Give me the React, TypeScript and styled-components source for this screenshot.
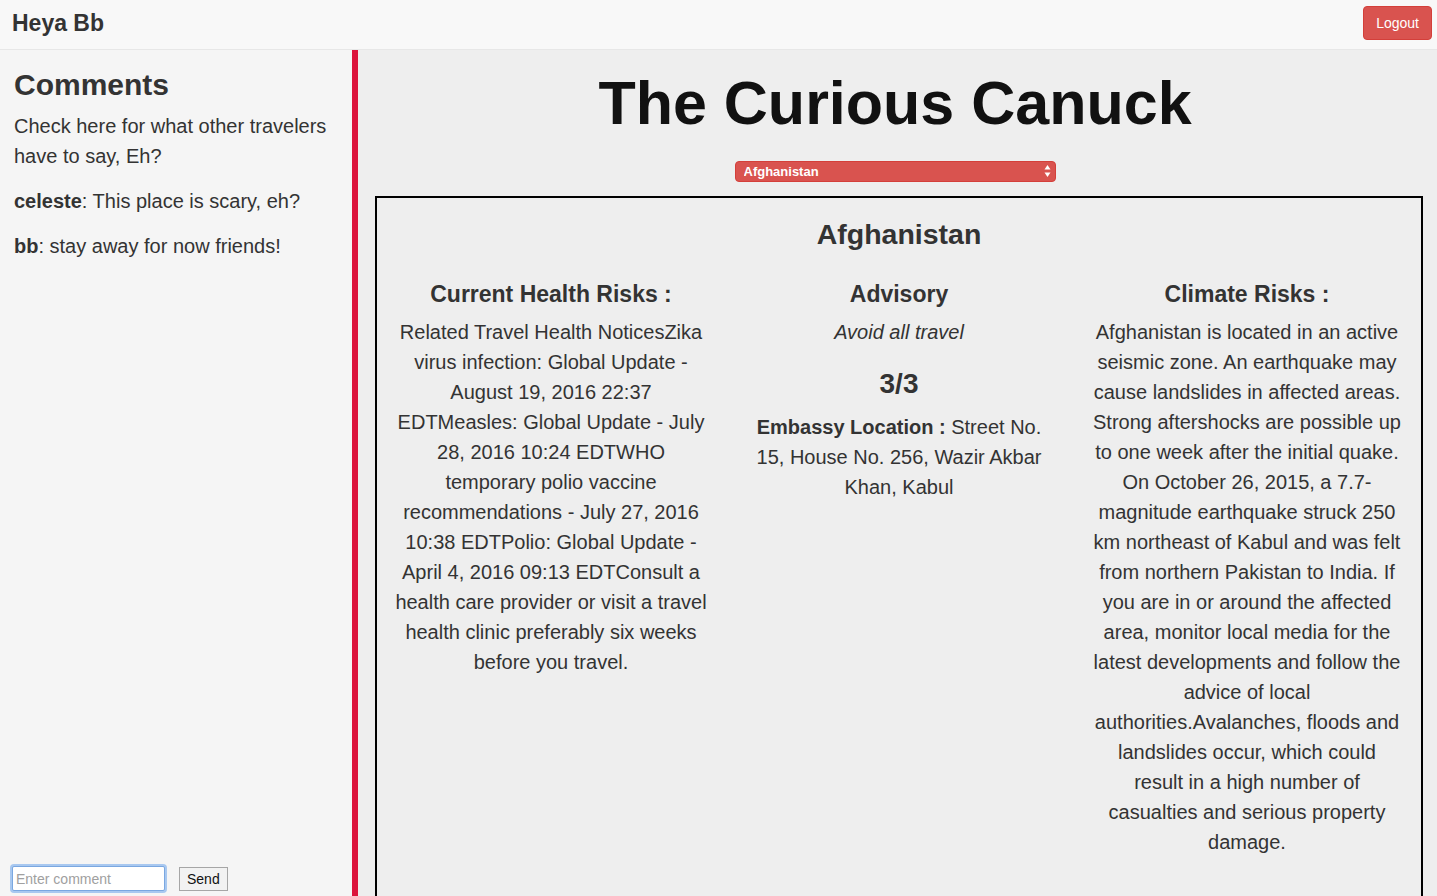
import React from "react";
import { styled, createGlobalStyle } from "styled-components";

const GlobalStyle = createGlobalStyle`
    html, body {
        margin: 0;
        padding: 0;
        height: 100%;
        overflow: hidden;
    }
    body {
        font-family: "Liberation Sans", Arial, Helvetica, sans-serif;
        color: #333;
        background: #eee;
    }
    * {
        box-sizing: border-box;
    }
`

const Page = styled.div`
    display: flex;
    flex-direction: column;
    height: 100vh;
`

const NavBar = styled.div`
    height: 50px;
    flex: none;
    display: flex;
    align-items: center;
    justify-content: space-between;
    padding: 0 5px 0 12px;
    background: #f8f8f8;
    border-bottom: 1px solid #e7e7e7;
`

const Brand = styled.div`
    font-size: 23px;
    font-weight: bold;
    color: #333;
    margin-top: -2px;
`

const DangerButton = styled.button`
    font-family: inherit;
    font-size: 14px;
    color: #fff;
    background: #d9534f;
    border: 1px solid #d43f3a;
    border-radius: 4px;
    height: 34px;
    padding: 0 12px;
    margin-top: -4px;
`

const Body = styled.div`
    flex: 1;
    display: flex;
    min-height: 0;
`

const Sidebar = styled.div`
    width: 358px;
    flex: none;
    display: flex;
    flex-direction: column;
    background: #f5f5f5;
    border-right: 6px solid #dc143c;
    padding: 0 14px 5px 14px;
`

const SideTitle = styled.h2`
    font-size: 30px;
    font-weight: bold;
    line-height: 33px;
    margin: 18px 0 10px;
`

const SideText = styled.p`
    font-size: 20px;
    line-height: 30px;
    margin: 0 0 15px;
`

const CommentForm = styled.form`
    margin-top: auto;
    display: flex;
    align-items: center;
    gap: 14px;
    margin-left: -2px;
`

const CommentInput = styled.input`
    width: 153px;
    height: 25px;
    font-family: inherit;
    font-size: 14px;
    padding: 2px 3px;
    border: 1px solid #7aa7e0;
    border-radius: 2px;
    outline: none;
    box-shadow: 0 0 0 2px #a8c8f0;
    background: #fff;
    &::placeholder {
        color: #a0a0a0;
    }
`

const PlainButton = styled.button`
    font-family: inherit;
    font-size: 14px;
    height: 24px;
    padding: 0 7px;
    background: #f2f2f2;
    border: 1px solid #a6a6a6;
    color: #111;
`

const Main = styled.div`
    flex: 1;
    padding: 0 14px 0 17px;
    display: flex;
    flex-direction: column;
    align-items: center;
    background: #eee;
`

const Title = styled.h1`
    font-size: 61px;
    font-weight: bold;
    line-height: 66px;
    margin: 20px 0 25px;
    color: #111;
    margin-right: 8px;
`

const SelectWrap = styled.div`
    position: relative;
    width: 321px;
    margin-right: 8px;
`

const CountrySelect = styled.select`
    appearance: none;
    width: 100%;
    height: 21px;
    font-family: inherit;
    font-size: 13px;
    font-weight: bold;
    color: #fff;
    background: #d9534f;
    border: 1px solid #d43f3a;
    border-radius: 4px;
    padding: 0 20px 0 8px;
    outline: none;
`

const Arrows = styled.span`
    position: absolute;
    right: 5px;
    top: 3px;
    pointer-events: none;
    display: flex;
`

const InfoBox = styled.div`
    align-self: stretch;
    margin-top: 14px;
    border: 2px solid #000;
    padding: 0 0 80px;
    text-align: center;
`

const CountryTitle = styled.h2`
    font-size: 28.5px;
    font-weight: bold;
    line-height: 33px;
    margin: 20px 0 10px;
`

const Columns = styled.div`
    display: grid;
    grid-template-columns: repeat(3, 1fr);
`

const Column = styled.div`
    padding: 0 15px;
`

const ColTitle = styled.h3`
    font-size: 23px;
    font-weight: bold;
    line-height: 26px;
    margin: 20px 0 10px;
`

const ColText = styled.p<{ $italic?: boolean; $width?: number }>`
    font-size: 20px;
    line-height: 30px;
    margin: 0 auto 10px;
    max-width: ${p => (p.$width ? `${p.$width}px` : "none")};
    font-style: ${p => (p.$italic ? "italic" : "normal")};
`

const Rating = styled.div`
    font-size: 28px;
    font-weight: bold;
    line-height: 31px;
    margin: 21px 0 13px;
`

const health =
    "Related Travel Health NoticesZika virus infection: Global Update - August 19, 2016 22:37 EDTMeasles: Global Update - July 28, 2016 10:24 EDTWHO temporary polio vaccine recommendations - July 27, 2016 10:38 EDTPolio: Global Update - April 4, 2016 09:13 EDTConsult a health care provider or visit a travel health clinic preferably six weeks before you travel."

const climate =
    "Afghanistan is located in an active seismic zone. An earthquake may cause landslides in affected areas. Strong aftershocks are possible up to one week after the initial quake. On October 26, 2015, a 7.7-magnitude earthquake struck 250 km northeast of Kabul and was felt from northern Pakistan to India. If you are in or around the affected area, monitor local media for the latest developments and follow the advice of local authorities.Avalanches, floods and landslides occur, which could result in a high number of casualties and serious property damage."

const comments = [
    { user: "celeste", text: "This place is scary, eh?" },
    { user: "bb", text: "stay away for now friends!" },
]

const App: React.FC = () => {
    return (
        <Page>
            <GlobalStyle />
            <NavBar>
                <Brand>Heya Bb</Brand>
                <DangerButton>Logout</DangerButton>
            </NavBar>
            <Body>
                <Sidebar>
                    <SideTitle>Comments</SideTitle>
                    <SideText>Check here for what other travelers have to say, Eh?</SideText>
                    {comments.map(c => (
                        <SideText key={c.user}>
                            <b>{c.user}</b>: {c.text}
                        </SideText>
                    ))}
                    <CommentForm onSubmit={e => e.preventDefault()}>
                        <CommentInput placeholder="Enter comment" />
                        <PlainButton type="submit">Send</PlainButton>
                    </CommentForm>
                </Sidebar>
                <Main>
                    <Title>The Curious Canuck</Title>
                    <SelectWrap>
                        <CountrySelect defaultValue="Afghanistan">
                            <option>Afghanistan</option>
                            <option>Albania</option>
                            <option>Algeria</option>
                        </CountrySelect>
                        <Arrows>
                            <svg width="7" height="14" viewBox="0 0 7 14">
                                <path d="M3.5 1 L6.5 5.5 L0.5 5.5 Z" fill="#fff" />
                                <path d="M3.5 13 L6.5 8.5 L0.5 8.5 Z" fill="#fff" />
                            </svg>
                        </Arrows>
                    </SelectWrap>
                    <InfoBox>
                        <CountryTitle>Afghanistan</CountryTitle>
                        <Columns>
                            <Column>
                                <ColTitle>Current Health Risks :</ColTitle>
                                <ColText>{health}</ColText>
                            </Column>
                            <Column>
                                <ColTitle>Advisory</ColTitle>
                                <ColText $italic>Avoid all travel</ColText>
                                <Rating>3/3</Rating>
                                <ColText $width={302}>
                                    <b>Embassy Location :</b> Street No. 15, House No. 256, Wazir Akbar Khan, Kabul
                                </ColText>
                            </Column>
                            <Column>
                                <ColTitle>Climate Risks :</ColTitle>
                                <ColText $width={309}>{climate}</ColText>
                            </Column>
                        </Columns>
                    </InfoBox>
                </Main>
            </Body>
        </Page>
    );
}

export default App;
